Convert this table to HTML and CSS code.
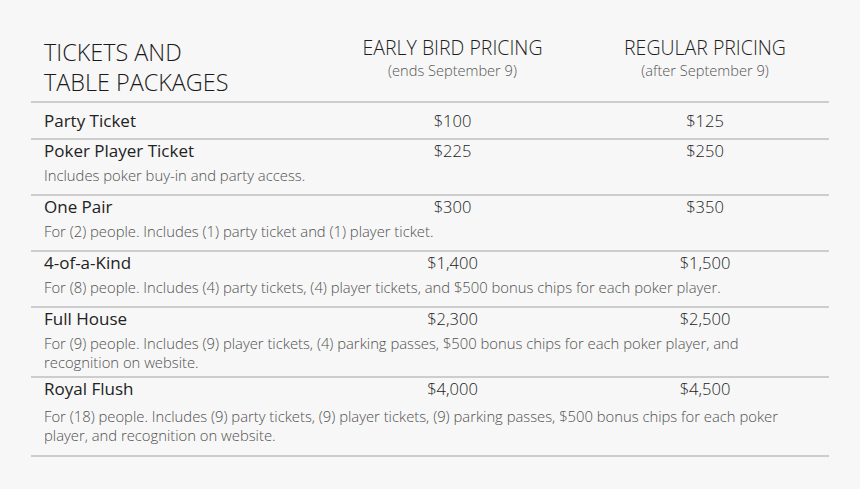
FILE: index.html
```html
<!DOCTYPE html>
<html>
<head>
<meta charset="utf-8">
<link rel="stylesheet" href="styles.css">
</head>
<body>
<div class="sheet">
  <div class="head">
    <div class="title">TICKETS AND<br>TABLE PACKAGES</div>
    <div class="colhead">
      <div class="colname">EARLY BIRD PRICING</div>
      <div class="colsub">(ends September 9)</div>
    </div>
    <div class="colhead">
      <div class="colname">REGULAR PRICING</div>
      <div class="colsub">(after September 9)</div>
    </div>
  </div>

  <div class="row row-single">
    <div class="name">Party Ticket</div>
    <div class="price">$100</div>
    <div class="price">$125</div>
  </div>

  <div class="row">
    <div class="name">Poker Player Ticket</div>
    <div class="price">$225</div>
    <div class="price">$250</div>
    <div class="desc">Includes poker buy-in and party access.</div>
  </div>

  <div class="row">
    <div class="name">One Pair</div>
    <div class="price">$300</div>
    <div class="price">$350</div>
    <div class="desc">For (2) people. Includes (1) party ticket and (1) player ticket.</div>
  </div>

  <div class="row">
    <div class="name">4-of-a-Kind</div>
    <div class="price">$1,400</div>
    <div class="price">$1,500</div>
    <div class="desc">For (8) people. Includes (4) party tickets, (4) player tickets, and $500 bonus chips for each poker player.</div>
  </div>

  <div class="row row-tight">
    <div class="name">Full House</div>
    <div class="price">$2,300</div>
    <div class="price">$2,500</div>
    <div class="desc">For (9) people. Includes (9) player tickets, (4) parking passes, $500 bonus chips for each poker player, and<br>recognition on website.</div>
  </div>

  <div class="row row-last">
    <div class="name">Royal Flush</div>
    <div class="price">$4,000</div>
    <div class="price">$4,500</div>
    <div class="desc">For (18) people. Includes (9) party tickets, (9) player tickets, (9) parking passes, $500 bonus chips for each poker<br>player, and recognition on website.</div>
  </div>
</div>
</body>
</html>
```

FILE: styles.css
```css
html, body {
  margin: 0;
  padding: 0;
  background: #f7f7f7;
}

body {
  font-family: "Open Sans", "Liberation Sans", sans-serif;
  font-weight: 300;
  color: #1e1e1e;
  width: 860px;
  height: 489px;
  overflow: hidden;
}

.sheet {
  margin-left: 31px;
  width: 798px;
  padding-top: 37px;
}

.head,
.row {
  display: grid;
  grid-template-columns: 293px 257px 248px;
}

.head {
  padding-bottom: 4px;
}

.title {
  font-size: 23.4px;
  line-height: 30px;
  padding-left: 13px;
  color: #1a1a1a;
}

.colhead {
  text-align: center;
}

.colname {
  font-size: 19.5px;
  line-height: 22px;
  color: #1e1e1e;
}

.colsub {
  font-size: 14.6px;
  line-height: 19px;
  color: #555;
  margin-top: 2px;
}

.row {
  border-top: 2px solid #cdcdcd;
  padding-top: 1px;
  padding-bottom: 9px;
}

.row-single {
  padding-top: 6px;
  padding-bottom: 5px;
}

.row-tight {
  padding-bottom: 4px;
}

.row-last {
  padding-bottom: 10px;
  border-bottom: 2px solid #cdcdcd;
}

.name {
  font-size: 17px;
  font-weight: 400;
  line-height: 20px;
  padding-left: 13px;
  color: #222;
}

.row-single .name,
.row-single .price {
  line-height: 24px;
}

.price {
  font-size: 16.5px;
  line-height: 20px;
  text-align: center;
  color: #222;
}

.desc {
  grid-column: 1 / -1;
  padding-left: 13px;
  margin-top: 5px;
  font-size: 14.8px;
  line-height: 19px;
  color: #505050;
  white-space: nowrap;
}

.row-last .desc {
  margin-top: 8px;
}
```
